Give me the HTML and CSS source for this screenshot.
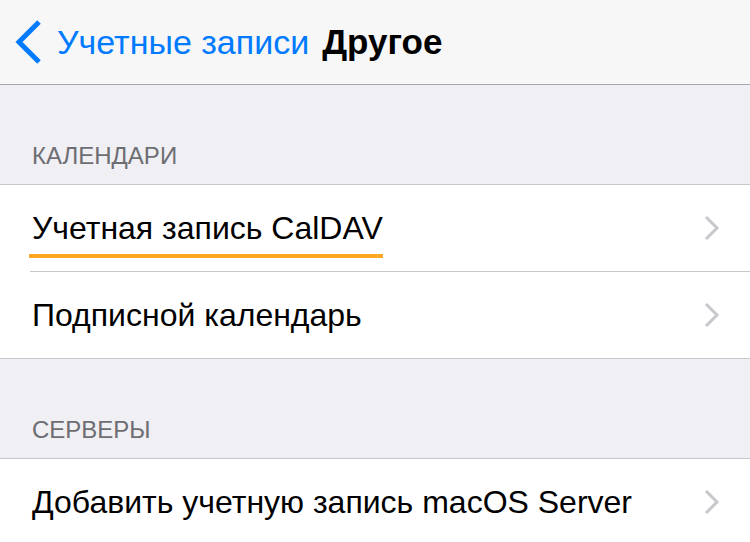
FILE: index.html
```html
<!DOCTYPE html>
<html lang="ru">
  <head>
    <meta charset="UTF-8" />
    <meta name="viewport" content="width=device-width, initial-scale=1.0" />
    <title>Другое</title>
    <link rel="stylesheet" href="styles.css">
  </head>
  <body>
    <!-- Navigation bar -->
    <div class="navbar">
      <a class="back" href="#">
        <svg class="back-icon" width="30" height="46" viewBox="0 0 30 46">
          <path d="M25 3 L5 23 L25 43" fill="none" stroke="#007aff" stroke-width="5" />
        </svg>
        <span>Учетные записи</span>
      </a>
      <span class="title">Другое</span>
    </div>

    <div class="section-header">КАЛЕНДАРИ</div>
    <ul class="list">
      <li class="row">
        <span class="label highlighted">Учетная запись CalDAV</span>
        <svg class="chevron" width="16" height="26" viewBox="0 0 16 26">
          <path d="M2 2 L13 13 L2 24" fill="none" stroke="#c7c7cc" stroke-width="3" />
        </svg>
      </li>
      <li class="row">
        <span class="label">Подписной календарь</span>
        <svg class="chevron" width="16" height="26" viewBox="0 0 16 26">
          <path d="M2 2 L13 13 L2 24" fill="none" stroke="#c7c7cc" stroke-width="3" />
        </svg>
      </li>
    </ul>

    <div class="section-header">СЕРВЕРЫ</div>
    <ul class="list">
      <li class="row">
        <span class="label">Добавить учетную запись macOS Server</span>
        <svg class="chevron" width="16" height="26" viewBox="0 0 16 26">
          <path d="M2 2 L13 13 L2 24" fill="none" stroke="#c7c7cc" stroke-width="3" />
        </svg>
      </li>
    </ul>
  </body>
</html>
```

FILE: styles.css
```css
/* iOS settings style list */
body {
  font-family: "Liberation Sans", Arial, sans-serif;
  margin: 0;
  background-color: #efeff4;
  color: #000;
  overflow: hidden;
}
.navbar {
  height: 84px;
  display: flex;
  align-items: center;
  padding-left: 14px;
  background-color: #f7f7f7;
  border-bottom: 1px solid #a7a7aa;
}
.back {
  display: flex;
  align-items: center;
  color: #007aff;
  text-decoration: none;
  font-size: 34px;
  margin-right: 13px;
}
.back-icon {
  margin-right: 13px;
}
.title {
  font-size: 35px;
  font-weight: bold;
}
.section-header {
  height: 99px;
  box-sizing: border-box;
  display: flex;
  align-items: flex-end;
  padding: 0 0 14px 32px;
  font-size: 24px;
  color: #6d6d72;
}
.list {
  list-style: none;
  margin: 0;
  padding: 0;
  background-color: #fff;
  border-top: 1px solid #c8c7cc;
  border-bottom: 1px solid #c8c7cc;
}
.row {
  height: 86px;
  display: flex;
  align-items: center;
  justify-content: space-between;
  margin-left: 30px;
  padding: 0 30px 0 2px;
}
.row + .row {
  border-top: 1px solid #c8c7cc;
}
.label {
  font-size: 32px;
  line-height: 37px;
}
.highlighted {
  border-bottom: 4px solid #ffa825;
  padding: 0 0 7px 3px;
  margin: 0 0 -11px -3px;
}
```
